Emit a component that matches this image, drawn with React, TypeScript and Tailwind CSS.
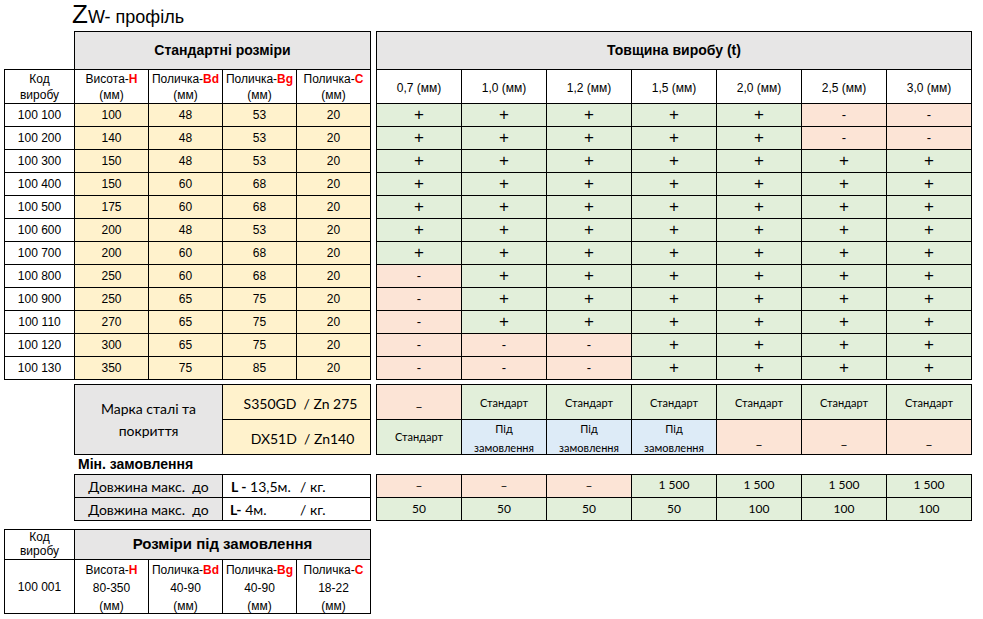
import React from "react";

const GRAY = "bg-[#e7e6e6]";
const YEL = "bg-[#fff2cc]";
const GRN = "bg-[#e2efda]";
const PNK = "bg-[#fce4d6]";
const BLU = "bg-[#ddebf7]";
const calibri = "font-['Lato',sans-serif]";

const sizes = [
  ["100 100", "100", "48", "53", "20"],
  ["100 200", "140", "48", "53", "20"],
  ["100 300", "150", "48", "53", "20"],
  ["100 400", "150", "60", "68", "20"],
  ["100 500", "175", "60", "68", "20"],
  ["100 600", "200", "48", "53", "20"],
  ["100 700", "200", "60", "68", "20"],
  ["100 800", "250", "60", "68", "20"],
  ["100 900", "250", "65", "75", "20"],
  ["100 110", "270", "65", "75", "20"],
  ["100 120", "300", "65", "75", "20"],
  ["100 130", "350", "75", "85", "20"],
];

// + available, - not available
const avail = [
  "+++++--",
  "+++++--",
  "+++++++",
  "+++++++",
  "+++++++",
  "+++++++",
  "+++++++",
  "-++++++",
  "-++++++",
  "-++++++",
  "---++++",
  "---++++",
];

const thick = ["0,7", "1,0", "1,2", "1,5", "2,0", "2,5", "3,0"];

function Red({ children }: { children: React.ReactNode }) {
  return <span className="font-bold text-[#ff0000]">{children}</span>;
}

const dims: [string, string][] = [
  ["Висота", "H"],
  ["Поличка", "Bd"],
  ["Поличка", "Bg"],
  ["Поличка", "C"],
];

function Mark({ v }: { v: string }) {
  if (v === "+")
    return <div className={`${GRN} flex items-center justify-center text-[17px]`}>+</div>;
  return <div className={`${PNK} flex items-center justify-center text-[13px]`}>-</div>;
}

export default function App() {
  return (
    <div className="w-[983px] h-[619px] bg-white text-black font-['Liberation_Sans',Arial,sans-serif] overflow-hidden">
      {/* title */}
      <div className="h-[31px] pl-[72px] pt-[1px] flex items-baseline">
        <span className="text-[26px] leading-[26px]">Z</span>
        <span className="text-[18px] leading-[26px]">W- профіль</span>
      </div>

      {/* main tables */}
      <div className="flex gap-[5px] pl-[4px]">
        <div className="w-[367px]">
          <div className={`ml-[70px] h-[38px] border border-b-0 border-black ${GRAY} flex items-center justify-center text-[14px] font-bold`}>
            Стандартні розміри
          </div>
          <div className="grid grid-cols-[69px_repeat(4,73px)] grid-rows-[33px_repeat(12,22px)] gap-px bg-black border border-black text-[12px]">
            <div className="bg-white flex flex-col items-center justify-center leading-[16px]">
              <div>Код</div>
              <div>виробу</div>
            </div>
            {dims.map(([l, r], i) => (
              <div key={i} className="bg-white flex flex-col items-center justify-center leading-[16px]">
                <div>
                  {l}-<Red>{r}</Red>
                </div>
                <div>(мм)</div>
              </div>
            ))}
            {sizes.map((row) =>
              row.map((v, j) => (
                <div key={row[0] + j} className={`${j === 0 ? "bg-white" : YEL} flex items-center justify-center`}>
                  {v}
                </div>
              ))
            )}
          </div>
        </div>

        <div className="w-[596px] grid grid-cols-[repeat(7,84px)] grid-rows-[37px_33px_repeat(12,22px)] gap-px bg-black border border-black text-[12px]">
          <div className={`col-span-7 ${GRAY} flex items-center justify-center text-[14px] font-bold`}>
            Товщина виробу (t)
          </div>
          {thick.map((t) => (
            <div key={t} className="bg-white flex items-center justify-center pt-[2px]">
              {t} (мм)
            </div>
          ))}
          {avail.map((row, i) => row.split("").map((v, j) => <Mark key={i + "-" + j} v={v} />))}
        </div>
      </div>

      {/* steel grade */}
      <div className={`mt-[4px] flex gap-[5px] pl-[74px] ${calibri}`}>
        <div className="w-[297px] grid grid-cols-[147px_147px] grid-rows-[34px_34px] gap-px bg-black border border-black">
          <div className={`row-span-2 ${GRAY} flex flex-col items-center justify-center text-[14px] leading-[22px]`}>
            <div>Марка сталі та</div>
            <div>покриття</div>
          </div>
          <div className={`${YEL} flex items-center justify-center pl-[8px] pt-[3px] text-[14px] whitespace-pre`}>
            S350GD  / Zn 275
          </div>
          <div className={`${YEL} flex items-center justify-center pl-[12px] pt-[3px] text-[14px] whitespace-pre`}>
            DX51D  / Zn140
          </div>
        </div>
        <div className="w-[596px] grid grid-cols-[repeat(7,84px)] grid-rows-[34px_34px] gap-px bg-black border border-black text-[11px]">
          <div className={`${PNK} flex items-center justify-center text-[13px]`}>_</div>
          {[0, 1, 2, 3, 4, 5].map((i) => (
            <div key={i} className={`${GRN} flex items-center justify-center pt-[3px]`}>
              Стандарт
            </div>
          ))}
          <div className={`${GRN} flex items-center justify-center`}>Стандарт</div>
          {[0, 1, 2].map((i) => (
            <div key={i} className={`${BLU} flex flex-col items-center justify-center leading-[19px] pt-[2px]`}>
              <div>Під</div>
              <div>замовлення</div>
            </div>
          ))}
          {[0, 1, 2].map((i) => (
            <div key={i} className={`${PNK} flex items-center justify-center pt-[6px] text-[13px]`}>
              _
            </div>
          ))}
        </div>
      </div>

      {/* min order */}
      <div className="h-[19px] pl-[78px] flex items-center text-[14px] font-bold">Мін. замовлення</div>

      <div className={`flex gap-[5px] pl-[74px] ${calibri}`}>
        <div className="w-[297px] grid grid-cols-[147px_147px] grid-rows-[22px_22px] gap-px bg-black border border-black text-[14px]">
          <div className={`${GRAY} flex items-center justify-center whitespace-pre`}>Довжина макс.  до</div>
          <div className="bg-white flex items-center pl-[8px] whitespace-pre">
            <span className="w-[69px]">
              <b>L -</b> 13,5м.
            </span>
            <span>/ кг.</span>
          </div>
          <div className={`${GRAY} flex items-center justify-center whitespace-pre`}>Довжина макс.  до</div>
          <div className="bg-white flex items-center pl-[7px] whitespace-pre">
            <span className="w-[70px]">
              <b>L-</b> 4м.
            </span>
            <span>/ кг.</span>
          </div>
        </div>
        <div className="w-[596px] grid grid-cols-[repeat(7,84px)] grid-rows-[22px_22px] gap-px bg-black border border-black text-[12px]">
          {[0, 1, 2].map((i) => (
            <div key={i} className={`${PNK} flex items-center justify-center`}>
              –
            </div>
          ))}
          {[0, 1, 2, 3].map((i) => (
            <div key={i} className={`${GRN} flex items-center justify-center pb-[3px]`}>
              1 500
            </div>
          ))}
          {["50", "50", "50", "50", "100", "100", "100"].map((v, i) => (
            <div key={i} className={`${GRN} flex items-center justify-center`}>
              {v}
            </div>
          ))}
        </div>
      </div>

      {/* custom sizes */}
      <div className="mt-[8px] pl-[4px]">
        <div className="w-[367px] grid grid-cols-[69px_repeat(4,73px)] grid-rows-[29px_53px] gap-px bg-black border border-black text-[12px]">
          <div className="bg-white flex flex-col items-center justify-start leading-[14px] overflow-hidden">
            <div>Код</div>
            <div>виробу</div>
          </div>
          <div className={`col-span-4 ${GRAY} flex items-center justify-center text-[15px] font-bold`}>
            Розміри під замовлення
          </div>
          <div className="bg-white flex items-center justify-center">100 001</div>
          {dims.map(([l, r], i) => (
            <div key={i} className="bg-white flex flex-col items-center justify-center leading-[18px] pt-[2px]">
              <div>
                {l}-<Red>{r}</Red>
              </div>
              <div>{["80-350", "40-90", "40-90", "18-22"][i]}</div>
              <div>(мм)</div>
            </div>
          ))}
        </div>
      </div>
    </div>
  );
}
